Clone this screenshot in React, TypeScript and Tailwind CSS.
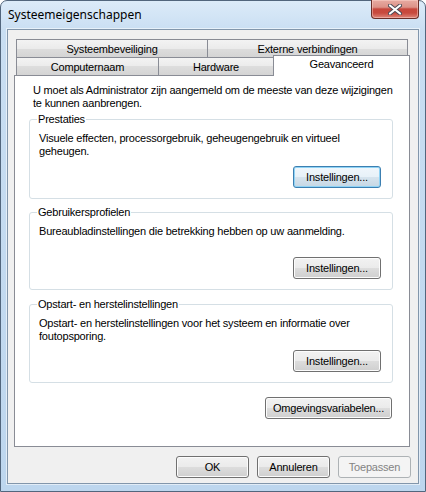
const ui =
    "font-['Liberation_Sans',Arial,sans-serif] text-[11px] leading-[13px] tracking-[-0.2px] text-black"

function Button({
    label,
    width,
    isDefault,
    disabled,
}: {
    label: string
    width: number
    isDefault?: boolean
    disabled?: boolean
}) {
    let cls =
        'flex h-[22px] items-center justify-center rounded-[3px] border border-[#707070] bg-[linear-gradient(to_bottom,#f2f2f2_0%,#ebebeb_48%,#dddddd_50%,#cfcfcf_100%)] shadow-[inset_0_0_0_1px_#fcfcfc]'
    if (isDefault)
        cls =
            'flex h-[22px] items-center justify-center rounded-[3px] border border-[#3c7fb1] bg-[linear-gradient(to_bottom,#f0f7fc_0%,#e7f1f8_48%,#d6e4ee_50%,#c6d7e4_100%)] shadow-[inset_0_0_0_1px_#8fd3f5]'
    if (disabled)
        cls =
            'flex h-[22px] items-center justify-center rounded-[3px] border border-[#adb2b5] bg-[#f4f4f4] text-[#838383]'
    return (
        <div className={cls} style={{ width }}>
            {label}
        </div>
    )
}

function Tab({ label, width, first }: { label: string; width: number; first?: boolean }) {
    return (
        <div
            className={
                'flex h-[18px] items-center justify-center border border-b-0 border-[#898c95] bg-[linear-gradient(to_bottom,#f3f3f3_0%,#ebebeb_50%,#dddddd_50%,#d4d4d4_100%)] pt-[1px] ' +
                (first ? '' : '-ml-px')
            }
            style={{ width }}
        >
            {label}
        </div>
    )
}

function Group({
    title,
    lines,
    height,
    top,
    isDefault,
}: {
    title: string
    lines: string[]
    height: number
    top: number
    isDefault?: boolean
}) {
    return (
        <div
            className="ml-[14px] flex w-[364px] flex-col rounded-[3px] border border-[#d5dfe5]"
            style={{ height, marginTop: top }}
        >
            <span className="-mt-[7px] ml-[7px] w-fit bg-white px-[1px]">{title}</span>
            <div className="mt-[6px] pl-[9px]">
                {lines.map((l) => (
                    <div key={l}>{l}</div>
                ))}
            </div>
            <div className="mt-auto mr-[11px] mb-[10px] flex justify-end">
                <Button label="Instellingen..." width={88} isDefault={isDefault} />
            </div>
        </div>
    )
}

export default function App() {
    return (
        <div className="h-[492px] w-[426px] bg-white">
            <div className="flex h-full w-full flex-col rounded-t-[7px] border border-[#52667d] bg-[linear-gradient(to_bottom,#dcebf9_0%,#c9def2_30px,#bdd6ee_100%)] px-[6px] pb-[7px]">
                {/* Title bar */}
                <div className="flex h-[28px] items-start justify-between">
                    <span className="mt-[6px] pl-[1px] font-['Noto_Sans',sans-serif] text-[12px] leading-[16px] text-black">
                        Systeemeigenschappen
                    </span>
                    <div className="-mt-px flex h-[19px] w-[48px] items-center justify-center rounded-b-[4px] border border-t-0 border-[#6a2e28] bg-[linear-gradient(to_bottom,#e8aba2_0%,#dc9288_40%,#c7473c_50%,#c84a3e_72%,#de8579_100%)] shadow-[inset_0_0_0_1px_rgba(255,220,210,0.45)]">
                        <svg width="14" height="11" viewBox="0 0 14 11">
                            <path
                                d="M2 1.5 L12 9.5 M12 1.5 L2 9.5"
                                stroke="#4a4a55"
                                strokeWidth="4"
                                strokeLinecap="round"
                            />
                            <path
                                d="M2 1.5 L12 9.5 M12 1.5 L2 9.5"
                                stroke="#ffffff"
                                strokeWidth="2.2"
                                strokeLinecap="round"
                            />
                        </svg>
                    </div>
                </div>

                {/* Client area */}
                <div
                    className={
                        'flex flex-1 flex-col border border-[#8296ab] bg-[#f0f0f0] pt-[9px] pl-[6px] shadow-[0_0_0_1px_rgba(255,255,255,0.55)] ' +
                        ui
                    }
                >
                    <div className="w-[396px]">
                        <div className="flex pl-[2px]">
                            <Tab label="Systeembeveiliging" width={192} first />
                            <Tab label="Externe verbindingen" width={201} />
                        </div>
                        <div className="flex pl-[2px]">
                            <Tab label="Computernaam" width={143} first />
                            <Tab label="Hardware" width={116} />
                            <div className="relative z-10 -mt-[2px] -mb-px -ml-px flex h-[21px] w-[137px] justify-center border border-b-0 border-[#898c95] bg-white pt-[2px]">
                                Geavanceerd
                            </div>
                        </div>
                        <div className="flex h-[372px] flex-col border border-[#898c95] bg-white pt-[8px]">
                            <div className="pl-[18px]">
                                <div>U moet als Administrator zijn aangemeld om de meeste van deze wijzigingen</div>
                                <div>te kunnen aanbrengen.</div>
                            </div>
                            <Group
                                title="Prestaties"
                                lines={[
                                    'Visuele effecten, processorgebruik, geheugengebruik en virtueel',
                                    'geheugen.',
                                ]}
                                height={80}
                                top={9}
                                isDefault
                            />
                            <Group
                                title="Gebruikersprofielen"
                                lines={['Bureaubladinstellingen die betrekking hebben op uw aanmelding.']}
                                height={78}
                                top={13}
                            />
                            <Group
                                title="Opstart- en herstelinstellingen"
                                lines={[
                                    'Opstart- en herstelinstellingen voor het systeem en informatie over',
                                    'foutopsporing.',
                                ]}
                                height={79}
                                top={14}
                            />
                            <div className="mt-[14px] mr-[17px] flex justify-end">
                                <Button label="Omgevingsvariabelen..." width={127} />
                            </div>
                        </div>
                    </div>

                    <div className="mt-[9px] flex justify-end gap-[8px] pr-[7px]">
                        <Button label="OK" width={73} />
                        <Button label="Annuleren" width={73} />
                        <Button label="Toepassen" width={73} disabled />
                    </div>
                </div>
            </div>
        </div>
    )
}
